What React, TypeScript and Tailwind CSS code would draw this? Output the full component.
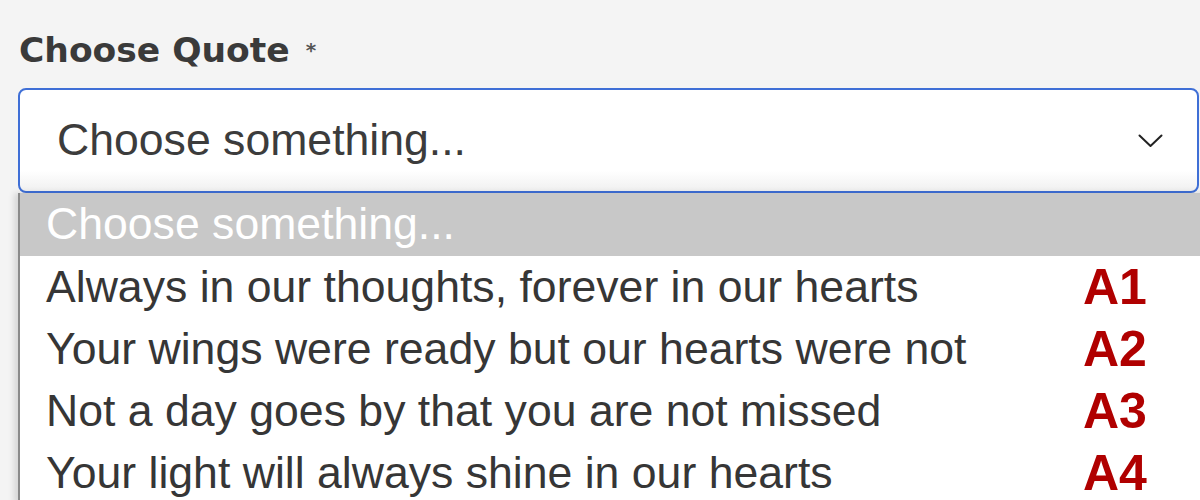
const options = [
  { text: "Always in our thoughts, forever in our hearts", tag: "A1" },
  { text: "Your wings were ready but our hearts were not", tag: "A2" },
  { text: "Not a day goes by that you are not missed", tag: "A3" },
  { text: "Your light will always shine in our hearts", tag: "A4" },
];

export default function App() {
  return (
    <div className="w-[1200px] h-[500px] overflow-hidden bg-[#f4f4f4] pl-[18px]">
      {/* label */}
      <div className="h-[88px] pt-[30px] pl-[1px] flex items-start gap-[16px] font-['DejaVu_Sans',sans-serif] text-[#3a3a3a]">
        <span className="text-[34.5px] leading-[40px] font-bold">Choose Quote</span>
        <span className="text-[20px] leading-[40px] font-bold text-[#555]">*</span>
      </div>

      {/* select box */}
      <div className="w-[1181px] h-[105px] rounded-[8px] border-2 border-[#3f6fd6] bg-gradient-to-b from-white from-80% to-[#f0f0f0] flex items-center justify-between pl-[37px] pr-[34px]">
        <span className="font-['Liberation_Sans',Arial,sans-serif] text-[44.6px] text-[#3c3c3c] leading-none">
          Choose something...
        </span>
        <svg width="25" height="14" viewBox="0 0 25 14" fill="none">
          <polyline points="1.5,1.5 12.5,12 23.5,1.5" stroke="#222" strokeWidth="2" strokeLinecap="round" strokeLinejoin="round" />
        </svg>
      </div>

      {/* dropdown list */}
      <div className="w-[1250px] border-l-2 border-[#8a8a8a] bg-white shadow-[-4px_0_6px_rgba(0,0,0,0.12)] font-['Liberation_Sans',Arial,sans-serif]">
        <div className="h-[63px] bg-[#c8c8c8] flex items-center pl-[26px] text-[44.6px] text-white leading-none">
          Choose something...
        </div>
        {options.map((o) => (
          <div key={o.tag} className="h-[62px] flex items-center pl-[26px] pr-[119px] justify-between">
            <span className="text-[44.6px] text-[#363636] leading-none">{o.text}</span>
            <span className="text-[50px] font-bold text-[#b00000] leading-none w-[66px]">{o.tag}</span>
          </div>
        ))}
      </div>
    </div>
  );
}
